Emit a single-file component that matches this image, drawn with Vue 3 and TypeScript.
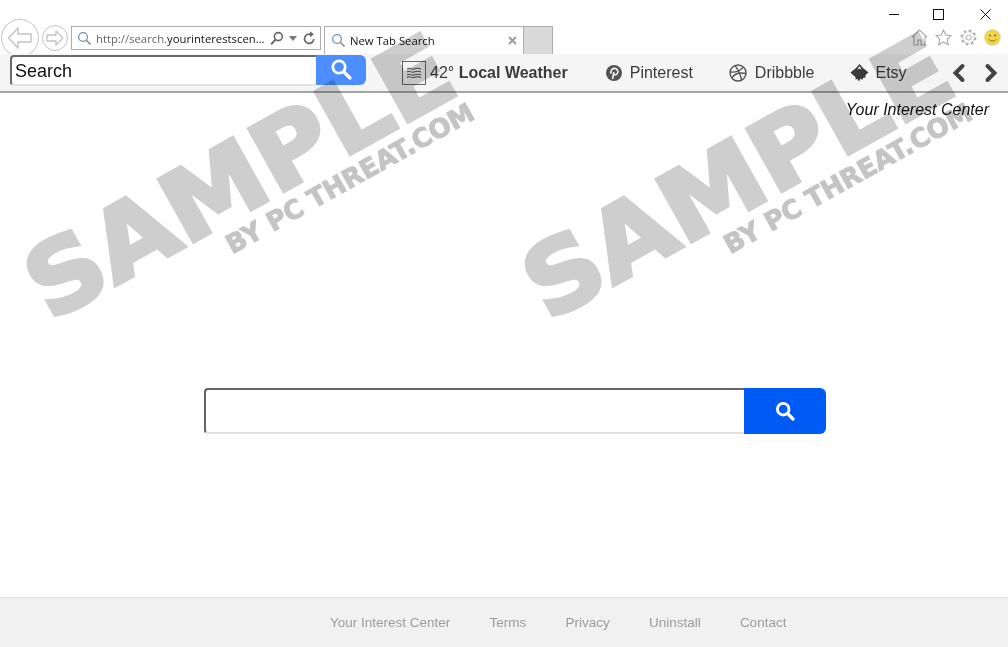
<script setup lang="ts">
const links = ['Your Interest Center', 'Terms', 'Privacy', 'Uninstall', 'Contact']
const marks = [0, 1]
</script>

<template>
  <div class="page">
    <header class="chrome">
      <div class="nav">
        <button class="round back" aria-label="Back">
          <svg width="26" height="24" viewBox="0 0 26 24"><path d="M11 2 1.500 12l9.500 10v-6h13V8H11z" fill="none" stroke="#c4c4c4" stroke-width="1.500" stroke-linejoin="round"/></svg>
        </button>
        <button class="round forward" aria-label="Forward">
          <svg width="18" height="16" viewBox="0 0 18 16"><path d="M10 1l7 7-7 7v-4H1V5h9z" fill="none" stroke="#c4c4c4" stroke-width="1.300" stroke-linejoin="round"/></svg>
        </button>
      </div>
      <div class="address">
        <svg class="mini" width="15" height="15" viewBox="0 0 15 15"><circle cx="6" cy="6" r="4.400" fill="none" stroke="#6d93b5" stroke-width="1.300"/><path d="M9.300 9.300 13.500 13.500" stroke="#8a8a8a" stroke-width="1.600"/></svg>
        <span class="url"><span class="dim">http://search.</span>yourinterestscen...</span>
        <svg width="14" height="15" viewBox="0 0 14 15"><circle cx="8.400" cy="5.600" r="4" fill="none" stroke="#666" stroke-width="1.600"/><path d="M5.400 8.600 1.200 13.400" stroke="#666" stroke-width="2"/></svg>
        <svg class="caret" width="8" height="5" viewBox="0 0 8 5"><path d="M0 0h8L4 5z" fill="#777"/></svg>
        <svg width="13" height="14" viewBox="0 0 13 14"><path d="M10.900 8.200A4.700 4.700 0 1 1 8 3.400" fill="none" stroke="#666" stroke-width="1.700"/><path d="M7 .3v6l4-3z" fill="#666"/></svg>
      </div>
      <div class="tab">
        <svg class="mini" width="15" height="15" viewBox="0 0 15 15"><circle cx="6" cy="6" r="4.400" fill="none" stroke="#6d93b5" stroke-width="1.300"/><path d="M9.300 9.300 13.500 13.500" stroke="#8a8a8a" stroke-width="1.600"/></svg>
        <span class="tab-title">New Tab Search</span>
        <svg width="9" height="9" viewBox="0 0 9 9"><path d="M1 1l7 7M8 1 1 8" stroke="#9a9a9a" stroke-width="1.800"/></svg>
      </div>
      <div class="newtab"></div>
      <div class="right">
        <div class="winctl">
          <svg width="10" height="10" viewBox="0 0 10 10"><path d="M0 5.500h10" stroke="#111" stroke-width="1"/></svg>
          <svg class="maxi" width="11" height="11" viewBox="0 0 11 11"><rect x=".5" y=".5" width="10" height="10" fill="none" stroke="#111"/></svg>
          <svg width="11" height="11" viewBox="0 0 11 11"><path d="M.5.5l10 10M10.500.5l-10 10" stroke="#111"/></svg>
        </div>
        <div class="tools">
          <svg width="17" height="17" viewBox="0 0 17 17"><path d="M.8 8.300 8.500 1l7.700 7.300M3 7v9h4v-5h3v5h4V7" fill="none" stroke="#a8a8a8" stroke-width="1.100"/></svg>
          <svg width="17" height="17" viewBox="0 0 17 17"><path d="M8.500 1l2.300 5 5.400.6-4 3.700 1.100 5.400-4.800-2.700-4.800 2.700 1.100-5.400-4-3.700 5.400-.6z" fill="none" stroke="#a8a8a8" stroke-width="1.100"/></svg>
          <svg width="17" height="17" viewBox="0 0 17 17"><circle cx="8.500" cy="8.500" r="2.600" fill="none" stroke="#a8a8a8"/><circle cx="8.500" cy="8.500" r="6" fill="none" stroke="#a8a8a8" stroke-width="1"/><circle cx="8.500" cy="8.500" r="7" fill="none" stroke="#fff" stroke-width="1.800"/><circle cx="8.500" cy="8.500" r="7" fill="none" stroke="#a8a8a8" stroke-width="1.800" stroke-dasharray="2.700 2.800"/></svg>
          <svg width="17" height="17" viewBox="0 0 17 17"><circle cx="8.500" cy="8.500" r="7.800" fill="#f2d34a" stroke="#d6c98e" stroke-width=".8"/><circle cx="6" cy="6.500" r="1" fill="#7a6a1e"/><circle cx="11" cy="6.500" r="1" fill="#7a6a1e"/><path d="M4.800 10.300c1.800 2.300 5.600 2.300 7.400 0" fill="none" stroke="#7a6a1e"/></svg>
        </div>
      </div>
    </header>

    <nav class="toolbar">
      <div class="search-top">
        <input class="top-input" value="Search" aria-label="Search" />
        <button class="top-btn" aria-label="Search">
          <svg width="22" height="22" viewBox="0 0 22 22"><circle cx="9" cy="9" r="6.200" fill="none" stroke="#fff" stroke-width="2.800"/><path d="M14 14l6 6" stroke="#fff" stroke-width="3.200" stroke-linecap="round"/></svg>
        </button>
      </div>
      <div class="weather">
        <span class="wbox">
          <svg width="16" height="11" viewBox="0 0 16 11"><path d="M1 2c3-2 4 1 7 0s4-1 7 0M1 5c3-2 4 1 7 0s4-1 7 0M1 8c3-2 4 1 7 0s4-1 7 0M1 10.500c3-2 4 1 7 0s4-1 7 0" fill="none" stroke="#444" stroke-width="1"/></svg>
        </span>
        <span class="tlabel">42° <b>Local Weather</b></span>
      </div>
      <div class="tlink pin">
        <svg width="16" height="16" viewBox="0 0 16 16"><circle cx="8" cy="8" r="8" fill="#555"/><path d="M6.600 14 7.900 7M5.300 8.600C4.100 6 6 3.400 8.500 3.400s3.800 2 3.200 4.200c-.6 2.300-3 2.800-4 1.300" fill="none" stroke="#f5f5f5" stroke-width="1.600"/></svg>
        <span>Pinterest</span>
      </div>
      <div class="tlink drib">
        <svg width="18" height="18" viewBox="0 0 18 18"><g fill="none" stroke="#555" stroke-width="1.400"><circle cx="9" cy="9" r="8"/><path d="M6 1.600c3 3.600 5.500 9 6.600 14.600M1.200 8c5 .6 9.500-.6 12.800-4.600M2.800 14c2.500-4 7-6 14-4.500"/></g></svg>
        <span>Dribbble</span>
      </div>
      <div class="tlink etsy">
        <svg width="19" height="18" viewBox="0 0 19 18"><path d="M9.500 0 13 4l5.500 4.500L15.500 11v2.500l-2.500.5-.8 2-1.700-1.500L9 17.500 7.500 15l-2 .5V13L3 11 .5 8.500 6 4z" fill="#3a3a3a"/><path d="M9.500 2 7.300 5.500l2-.8 2.400.8z" fill="#eee"/></svg>
        <span>Etsy</span>
      </div>
      <div class="arrows">
        <svg width="14" height="20" viewBox="0 0 14 20"><path d="M10.500 3 3.500 10l7 7" fill="none" stroke="#444" stroke-width="4" stroke-linecap="round"/></svg>
        <svg width="14" height="20" viewBox="0 0 14 20"><path d="M3.500 3l7 7-7 7" fill="none" stroke="#444" stroke-width="4" stroke-linecap="round"/></svg>
      </div>
    </nav>

    <main class="main">
      <p class="brand">Your Interest Center</p>
      <form class="search-main" @submit.prevent>
        <input class="main-input" aria-label="Search the web" />
        <button class="main-btn" aria-label="Search">
          <svg width="20" height="20" viewBox="0 0 20 20"><circle cx="8.200" cy="8.200" r="5.800" fill="none" stroke="#fff" stroke-width="2.800"/><path d="M12.500 12.500 18 18" stroke="#fff" stroke-width="3.200" stroke-linecap="round"/></svg>
        </button>
      </form>
    </main>

    <footer class="footer">
      <a v-for="l in links" :key="l" class="flink">{{ l }}</a>
    </footer>

    <div v-for="m in marks" :key="m" class="mark" :class="'m' + m" aria-hidden="true">
      <span class="big">SAMPLE</span>
      <span class="small">BY PC THREAT.COM</span>
    </div>
  </div>
</template>

<style>
html, body { margin: 0; background: #fff; overflow: hidden; }
</style>

<style scoped>
.page {
  position: relative;
  width: 1008px;
  height: 647px;
  display: flex;
  flex-direction: column;
  overflow: hidden;
  font-family: "Liberation Sans", Arial, sans-serif;
  color: #444;
}
button { border: 0; padding: 0; background: none; display: flex; align-items: center; justify-content: center; }
.chrome { height: 54px; display: flex; align-items: flex-end; flex: none; }
.nav { display: flex; align-items: center; margin-left: 1px; height: 38px; margin-bottom: -3px; gap: 3px; width: 70px; flex: none; }
.round { border: 1px solid #c4c4c4; border-radius: 50%; background: #fff; box-sizing: border-box; flex: none; }
.back { width: 38px; height: 38px; }
.forward { width: 26px; height: 26px; }
.address {
  box-sizing: border-box; width: 250px; height: 24px; margin-bottom: 4px;
  border: 1px solid #adadad; display: flex; align-items: center; padding: 0 4px 0 5px;
  font-family: "Open Sans", "Noto Sans", sans-serif; font-size: 11.300px; color: #111;
}
.url { margin-left: 4px; width: 175px; white-space: nowrap; overflow: hidden; }
.dim { color: #666; }
.caret { margin: 0 6px 0 5px; }
.mini { flex: none; }
.tab {
  box-sizing: border-box; width: 200px; height: 28px; margin-left: 3px;
  border: 1px solid #adadad; border-bottom: 0; display: flex; align-items: center; padding: 0 6px;
  font-family: "Open Sans", "Noto Sans", sans-serif; font-size: 11.300px; color: #111;
}
.tab-title { flex: 1; margin-left: 4px; }
.newtab { box-sizing: border-box; width: 29px; height: 28px; background: #d9d9d9; border: 1px solid #adadad; border-bottom: 0; border-left: 0; }
.right { margin-left: auto; height: 54px; display: flex; flex-direction: column; align-items: flex-end; }
.winctl { display: flex; align-items: center; gap: 34px; height: 28px; padding-right: 17px; }
.maxi { margin-right: 2px; }
.tools { display: flex; gap: 7.500px; padding-right: 7px; margin-top: 1px; }
.toolbar {
  position: relative;
  height: 39px; flex: none; box-sizing: border-box; background: #f5f5f5; border-bottom: 2px solid #a3a3a3;
  display: flex; align-items: center; padding-left: 10px; font-size: 16px; color: #3c3c3c;
}
.search-top { display: flex; height: 31px; margin-top: -4px; }
.top-input {
  box-sizing: border-box; width: 306px; height: 31px; border: 2px solid #6a6a6a; border-right: 0; border-bottom-color: #e2e2e2;
  border-radius: 4px 0 0 4px; padding: 2px 3px 0; font: 18px "Liberation Sans", Arial, sans-serif; color: #111; background: #fff; outline: none;
}
.top-btn { width: 50px; height: 30px; background: #4c8dff; border-radius: 0 6px 6px 0; padding-bottom: 2px; }
.weather { display: flex; align-items: center; margin-left: 36px; gap: 4px; }
.wbox { box-sizing: border-box; width: 24px; height: 24px; border: 1px solid #666; display: flex; align-items: center; justify-content: center; }
.tlabel { white-space: nowrap; }
.tlabel b { font-weight: 700; }
.tlink { display: flex; align-items: center; gap: 8px; }
.pin { margin-left: 38px; }
.drib { margin-left: 36px; }
.etsy { margin-left: 36px; gap: 6px; }
.arrows { margin-left: auto; padding-right: 10px; display: flex; gap: 18px; }
.main { flex: 1; position: relative; display: flex; flex-direction: column; align-items: center; }
.brand { align-self: flex-end; margin: 7px 19px 0 0; font-size: 16px; font-style: italic; color: #111; line-height: 20px; }
.search-main { display: flex; margin: 268px 0 0 22px; width: 622px; height: 46px; }
.main-input {
  box-sizing: border-box; width: 540px; height: 46px; border: 2px solid #666; border-right: 0; border-bottom-color: #e2e2e2;
  border-radius: 4px 0 0 4px; background: #fff; outline: none;
}
.main-btn { width: 82px; height: 46px; background: #005bf5; border-radius: 0 6px 6px 0; }
.footer {
  height: 50px; flex: none; box-sizing: border-box; background: #f1f1f1; border-top: 1px solid #e4e4e4;
  display: flex; align-items: center; padding-left: 330px; gap: 39.200px; font-size: 13.500px; color: #9c9c9c;
}
.flink { white-space: nowrap; }
.mark {
  position: absolute; left: 50px; top: 322px; width: 0; height: 0;
  transform-origin: 0 0; transform: rotate(-29.200deg); mix-blend-mode: multiply; pointer-events: none;
  font-family: "DejaVu Sans", sans-serif; font-weight: 700; color: #cecece; white-space: nowrap;
}
.m1 { left: 548px; }
.big {
  position: absolute; left: 0; top: -86px; font-size: 98px; line-height: 105px;
  -webkit-text-stroke: 4px #cecece;
  transform-origin: 0 86px; transform: scaleX(1.060);
}
.small {
  position: absolute; left: 192px; top: 6px; font-size: 26px; line-height: 30px; color: #c4c4c4;
  -webkit-text-stroke: 1px #c4c4c4;
}
</style>
